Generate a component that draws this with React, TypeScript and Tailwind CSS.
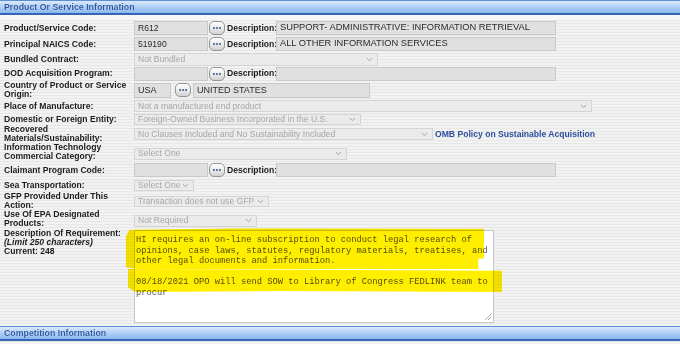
import React from "react";

const SANS = "font-['Liberation_Sans',Arial,sans-serif]";

function Bar({ title }: { title: string }) {
  return (
    <div className="h-[15px] border-t border-t-[#5b8ed4] border-b-2 border-b-[#3467b3] bg-[linear-gradient(180deg,#dceafb_0%,#b3d1f4_45%,#8ab8ee_100%)] flex items-center pl-[4px]">
      <span className="text-[8.8px] leading-none font-bold text-[#2957a6] [text-shadow:0_0_1px_#ffffff]">{title}</span>
    </div>
  );
}

function Label({ children }: { children: React.ReactNode }) {
  return (
    <div className="w-[134px] shrink-0 pl-[4px] text-[8.6px] leading-[9px] font-bold text-[#1c1c1c]">
      {children}
    </div>
  );
}

function Input({ w, value, h, size }: { w: string; value?: string; h?: string; size?: string }) {
  return (
    <div
      className={`${w} ${h ?? "h-[14px]"} ${size ?? "text-[8.6px]"} shrink-0 bg-[#e0e0e0] border border-[#c9c9c9] flex items-center pl-[3px] leading-none text-[#2a2a2a] overflow-hidden whitespace-nowrap`}
    >
      {value}
    </div>
  );
}

function Dots() {
  return (
    <div className="w-[16px] h-[14px] shrink-0 rounded-[5px] border border-[#959595] bg-[linear-gradient(180deg,#ffffff_0%,#ececec_50%,#d2d2d2_100%)] flex items-center justify-center gap-[1px]">
      <span className="w-[2px] h-[2px] bg-[#3a5683] rounded-full" />
      <span className="w-[2px] h-[2px] bg-[#3a5683] rounded-full" />
      <span className="w-[2px] h-[2px] bg-[#3a5683] rounded-full" />
    </div>
  );
}

function Chevron() {
  return (
    <svg width="7" height="5" viewBox="0 0 7 5" className="shrink-0">
      <polyline points="0.8,1 3.5,3.6 6.2,1" fill="none" stroke="#a3a3a3" strokeWidth="1" />
    </svg>
  );
}

function Select({ w, value, h }: { w: string; value: string; h?: string }) {
  return (
    <div
      className={`${w} ${h ?? "h-[12px]"} shrink-0 bg-[#ebebeb] border border-[#d4d4d4] flex items-center justify-between pl-[3px] pr-[4px] text-[8.6px] leading-none text-[#a6a6a6] overflow-hidden whitespace-nowrap`}
    >
      <span>{value}</span>
      <Chevron />
    </div>
  );
}

function DescLabel() {
  return (
    <div className="w-[51px] shrink-0 pl-[2px] text-[8.6px] leading-none font-bold text-[#1c1c1c]">Description:</div>
  );
}

function CodeRow({ label, code, desc, h }: { label: string; code: string; desc: string; h: string }) {
  return (
    <div className={`${h} flex items-center`}>
      <Label>{label}</Label>
      <Input w="w-[74px]" value={code} />
      <div className="w-[1px]" />
      <Dots />
      <DescLabel />
      <Input w="w-[280px]" value={desc} size="text-[9.3px]" />
    </div>
  );
}

export default function App() {
  const lines = [
    "HI requires an on-line subscription to conduct legal research of",
    "opinions, case laws, statutes, regulatory materials, treatises, and",
    "other legal documents and information.",
    "",
    "08/18/2021 OPO will send SOW to Library of Congress FEDLINK team to",
    "procur",
  ];
  return (
    <div
      className={`${SANS} relative w-[680px] h-[344px] overflow-hidden bg-[repeating-linear-gradient(180deg,#f2f2f2_0px,#f2f2f2_2px,#e7e7e7_2px,#e7e7e7_3px)]`}
    >
      <Bar title="Product Or Service Information" />
      <div className="h-[5px] bg-[#f6f6f6]" />

      <CodeRow h="h-[16px]" label="Product/Service Code:" code="R612" desc="SUPPORT- ADMINISTRATIVE: INFORMATION RETRIEVAL" />
      <CodeRow h="h-[16px]" label="Principal NAICS Code:" code="519190" desc="ALL OTHER INFORMATION SERVICES" />

      <div className="h-[14px] flex items-center">
        <Label>Bundled Contract:</Label>
        <Select w="w-[244px]" h="h-[13px]" value="Not Bundled" />
      </div>

      <CodeRow h="h-[15px]" label="DOD Acquisition Program:" code="" desc="" />

      <div className="h-[18px] flex items-center">
        <Label>
          Country of Product or Service
          <br />
          Origin:
        </Label>
        <Input w="w-[37px]" h="h-[15px]" value="USA" size="text-[9px]" />
        <div className="w-[4px]" />
        <Dots />
        <div className="w-[2px]" />
        <Input w="w-[177px]" h="h-[15px]" value="UNITED STATES" size="text-[9px]" />
      </div>

      <div className="h-[14px] flex items-center">
        <Label>Place of Manufacture:</Label>
        <Select w="w-[458px]" value="Not a manufactured end product" />
      </div>

      <div className="h-[12px] flex items-center">
        <Label>Domestic or Foreign Entity:</Label>
        <Select w="w-[227px]" h="h-[11px]" value="Foreign-Owned Business Incorporated in the U.S." />
      </div>

      <div className="h-[18px] flex items-center">
        <Label>
          Recovered
          <br />
          Materials/Sustainability:
        </Label>
        <Select w="w-[299px]" value="No Clauses Included and No Sustainability Included" />
        <span className="ml-[2px] text-[8.6px] leading-none font-bold text-[#2c4f9c]">OMB Policy on Sustainable Acquisition</span>
      </div>

      <div className="h-[18px] flex items-center">
        <Label>
          Information Technology
          <br />
          Commercial Category:
        </Label>
        <div className="pt-[3px]">
          <Select w="w-[213px]" value="Select One" />
        </div>
      </div>

      <CodeRow h="h-[18px]" label="Claimant Program Code:" code="" desc="" />

      <div className="h-[13px] flex items-center">
        <Label>Sea Transportation:</Label>
        <Select w="w-[60px]" h="h-[11px]" value="Select One" />
      </div>

      <div className="h-[18px] flex items-center">
        <Label>
          GFP Provided Under This
          <br />
          Action:
        </Label>
        <Select w="w-[135px]" h="h-[11px]" value="Transaction does not use GFP" />
      </div>

      <div className="h-[18px] flex items-center">
        <Label>
          Use Of EPA Designated
          <br />
          Products:
        </Label>
        <div className="pt-[3px]">
          <Select w="w-[123px]" value="Not Required" />
        </div>
      </div>

      <div className="h-[98px] flex items-start">
        <div className="w-[134px] shrink-0 pl-[4px] pt-[1px] text-[8.6px] leading-[9px] font-bold text-[#1c1c1c]">
          <div>Description Of Requirement:</div>
          <div className="italic">(Limit 250 characters)</div>
          <div>Current: 248</div>
        </div>
        <div className="relative mt-[2px] w-[360px] h-[93px] bg-white border border-[#c6c6c6] pl-[1px] pt-[4px] font-['Liberation_Mono','DejaVu_Sans_Mono',monospace] text-[8.75px] leading-[10.5px] text-[#555555] whitespace-pre">
          {lines.map((l, i) => (
            <div key={i} className="h-[10.5px]">{l}</div>
          ))}
          <svg width="8" height="8" viewBox="0 0 8 8" className="absolute right-[1px] bottom-[1px]">
            <line x1="7" y1="1" x2="1" y2="7" stroke="#9a9a9a" strokeWidth="0.8" />
            <line x1="7" y1="4" x2="4" y2="7" stroke="#9a9a9a" strokeWidth="0.8" />
          </svg>
        </div>
      </div>

      <Bar title="Competition Information" />

      {/* highlighter marks drawn over the textarea */}
      <div className="absolute left-[126px] top-[228px] w-[358px] h-[41px] bg-[#ffee00] mix-blend-multiply [clip-path:polygon(1%_4%,30%_1%,100%_2%,100%_74%,98.4%_75%,98.4%_100%,3%_100%,0%_96%,0%_20%)]" />
      <div className="absolute left-[128px] top-[269px] w-[374px] h-[23px] bg-[#ffee00] mix-blend-multiply [clip-path:polygon(0%_0%,60%_4%,100%_8%,100%_100%,40%_96%,2%_100%,0%_80%)]" />
    </div>
  );
}
